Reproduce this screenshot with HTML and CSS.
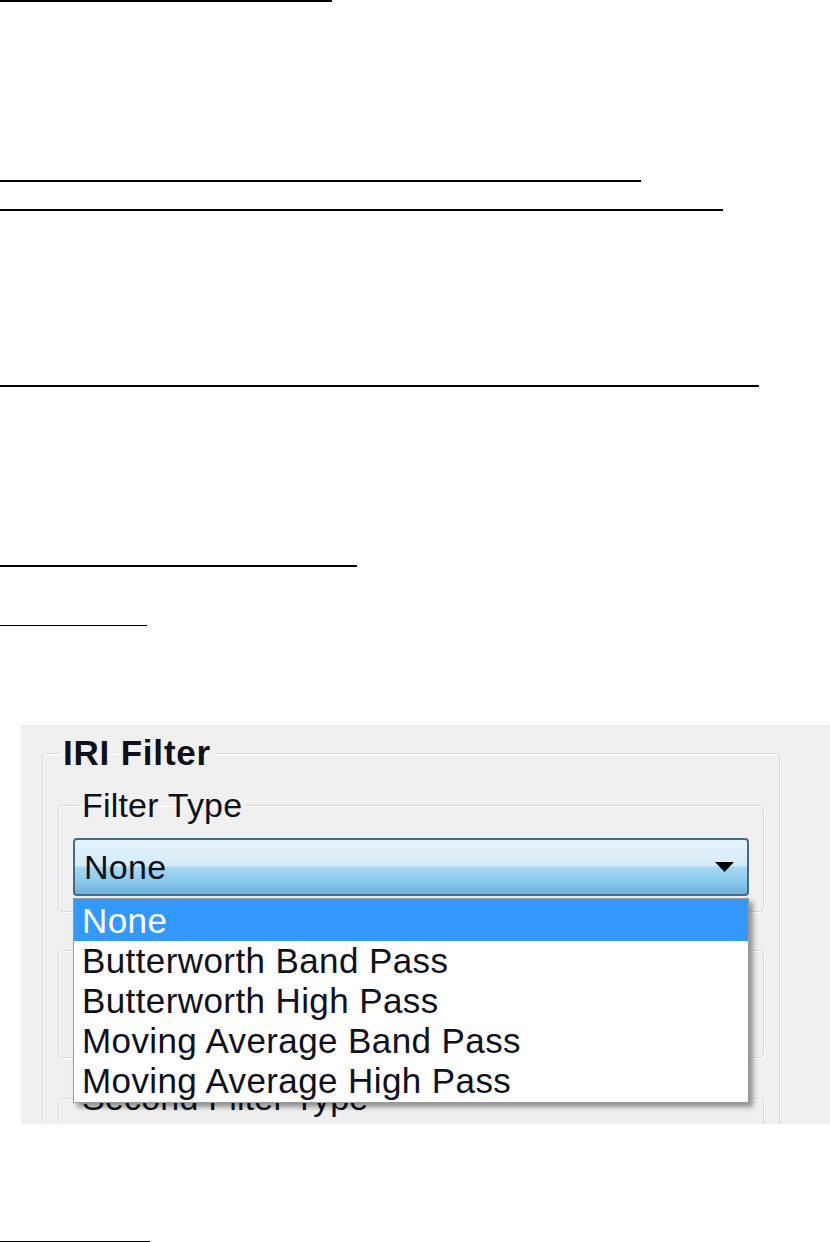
FILE: index.html
```html
<!DOCTYPE html>
<html>
<head>
<meta charset="utf-8">
<link rel="stylesheet" href="styles.css">
</head>
<body>
<div class="doc">
  <div class="rule rule-1"></div>
  <div class="rule rule-2"></div>
  <div class="rule rule-3"></div>
  <div class="rule rule-4"></div>
  <div class="rule rule-5"></div>
  <div class="rule rule-6"></div>

  <div class="dialog">
    <fieldset class="group outer">
      <legend class="title bold">IRI Filter</legend>

      <fieldset class="group inner first">
        <legend class="title">Filter Type</legend>
        <div class="combo">
          <span class="combo-text">None</span>
          <svg class="combo-arrow" width="19" height="10" viewBox="0 0 19 10"><polygon points="0,0 19,0 9.5,10" fill="#000"/></svg>
        </div>
      </fieldset>

      <div class="group inner plain"></div>

      <fieldset class="group inner last">
        <legend class="title">Second Filter Type</legend>
      </fieldset>
    </fieldset>

    <ul class="list">
      <li class="item selected">None</li>
      <li class="item">Butterworth Band Pass</li>
      <li class="item">Butterworth High Pass</li>
      <li class="item">Moving Average Band Pass</li>
      <li class="item">Moving Average High Pass</li>
    </ul>
  </div>

  <div class="rule rule-7"></div>
</div>
</body>
</html>
```

FILE: styles.css
```css
html, body {
  margin: 0;
  padding: 0;
  background: #ffffff;
}

.doc {
  display: flex;
  flex-direction: column;
  align-items: flex-start;
  width: 830px;
  height: 1242px;
  overflow: hidden;
}

.rule {
  background: #000;
  height: 2px;
  flex: none;
}
.rule-1 { width: 332px; margin-top: 0; }
.rule-2 { width: 641px; margin-top: 178px; }
.rule-3 { width: 723px; margin-top: 27px; }
.rule-4 { width: 759px; margin-top: 174px; }
.rule-5 { width: 357px; margin-top: 178px; }
.rule-6 { width: 147px; height: 1px; margin-top: 58px; }
.rule-7 { width: 150px; margin-top: 117px; }

.dialog {
  position: relative;
  flex: none;
  margin-top: 99px;
  margin-left: 21px;
  width: 809px;
  height: 399px;
  background: #f0f0f0;
  overflow: hidden;
  font-family: "Liberation Sans", Arial, sans-serif;
  color: #10101c;
}

.group {
  box-sizing: border-box;
  margin: 0;
  border: 1px solid #d3dce3;
  border-radius: 4px;
  box-shadow: inset 1px 1px 0 #ffffff, 1px 1px 0 #ffffff;
  min-inline-size: 0;
}

.outer {
  margin: 10px 0 0 21px;
  width: 738px;
  height: 440px;
  padding: 17px 15px 0;
}

.title {
  padding: 0 3px;
  font-size: 34px;
  line-height: 34px;
  white-space: nowrap;
  letter-spacing: 0.2px;
}

.title.bold {
  margin-left: 2px;
  font-size: 35px;
  line-height: 36px;
  font-weight: bold;
  letter-spacing: 0.8px;
}

.inner .title {
  margin-left: 6px;
}

.inner {
  width: 706px;
  padding: 0 14px;
}

.first {
  padding-top: 16px;
  padding-bottom: 15px;
}

.plain {
  margin-top: 38px;
  height: 108px;
}

.last {
  margin-top: 23px;
  height: 120px;
}

.combo {
  box-sizing: border-box;
  height: 58px;
  display: flex;
  align-items: center;
  justify-content: space-between;
  padding: 0 13px 0 9px;
  border: 2px solid #3f6c8c;
  border-radius: 4px;
  background: linear-gradient(to bottom,
    #e6f3fb 0%, #d4ebf8 48%, #a9d9f2 50%, #8ccaec 75%, #6cb2dc 100%);
}

.combo-text {
  font-size: 34px;
  line-height: 54px;
  letter-spacing: 0.3px;
}

.combo-arrow {
  display: block;
  flex: none;
}

.list {
  position: absolute;
  left: 52px;
  top: 173px;
  box-sizing: border-box;
  width: 676px;
  margin: 0;
  padding: 0 0 3px;
  list-style: none;
  background: #ffffff;
  border: 1px solid #9c9c9c;
  box-shadow: 4px 4px 5px rgba(0, 0, 0, 0.4);
}

.item {
  box-sizing: border-box;
  height: 40px;
  padding: 4px 0 0 8px;
  font-size: 35px;
  line-height: 36px;
  white-space: nowrap;
  letter-spacing: 0.4px;
}

.item.selected {
  background: #3399ff;
  color: #ffffff;
  height: 42px;
  margin-bottom: -2px;
}
```
